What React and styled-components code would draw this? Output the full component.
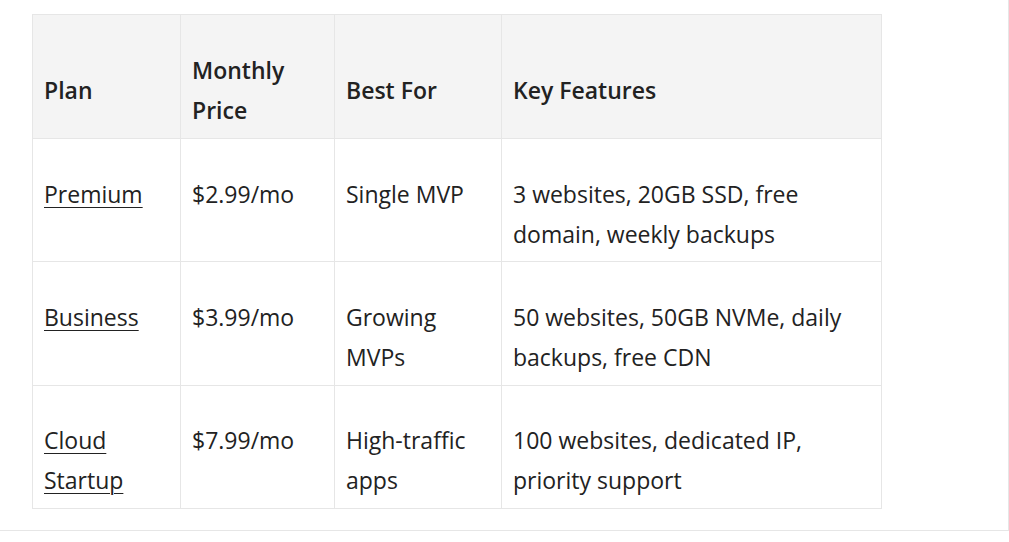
import styled, { createGlobalStyle } from 'styled-components';

const GlobalStyle = createGlobalStyle`
  html, body {
    margin: 0;
    padding: 0;
    background: #fff;
  }
  body {
    font-family: "Open Sans", "Noto Sans", "Liberation Sans", sans-serif;
    color: #222;
  }
`;

const Page = styled.div`
  box-sizing: border-box;
  width: 1009px;
  padding: 14px 0 21px 32px;
  border-right: 1px solid #e6e6e6;
  border-bottom: 1px solid #e6e6e6;
`;

const Table = styled.table`
  border-collapse: collapse;
  table-layout: fixed;
  width: 849px;
  font-size: 23px;
  line-height: 40px;
`;

const Head = styled.th`
  background: #f4f4f4;
  border: 1px solid #e6e6e6;
  padding: 35px 11px 8px;
  text-align: left;
  vertical-align: middle;
  font-weight: 600;
`;

const Cell = styled.td`
  border: 1px solid #e6e6e6;
  padding: 34.6px 11px 7.7px;
  vertical-align: top;
  font-weight: 400;
`;

const PlanLink = styled.a`
  color: #222;
  text-decoration: underline;
  text-underline-offset: 4px;
  text-decoration-thickness: 1px;
`;

const plans = [
  { name: 'Premium', price: '$2.99/mo', best: 'Single MVP', features: '3 websites, 20GB SSD, free domain, weekly backups' },
  { name: 'Business', price: '$3.99/mo', best: 'Growing MVPs', features: '50 websites, 50GB NVMe, daily backups, free CDN' },
  { name: 'Cloud Startup', price: '$7.99/mo', best: 'High-traffic apps', features: '100 websites, dedicated IP, priority support' },
];

const App = () => (
  <Page>
    <GlobalStyle />
    <Table>
      <colgroup>
        <col style={{ width: 148 }} />
        <col style={{ width: 154 }} />
        <col style={{ width: 167 }} />
        <col style={{ width: 380 }} />
      </colgroup>
      <thead>
        <tr>
          <Head>Plan</Head>
          <Head>Monthly Price</Head>
          <Head>Best For</Head>
          <Head>Key Features</Head>
        </tr>
      </thead>
      <tbody>
        {plans.map((p) => (
          <tr key={p.name}>
            <Cell><PlanLink href="#">{p.name}</PlanLink></Cell>
            <Cell>{p.price}</Cell>
            <Cell>{p.best}</Cell>
            <Cell>{p.features}</Cell>
          </tr>
        ))}
      </tbody>
    </Table>
  </Page>
);

export default App;
